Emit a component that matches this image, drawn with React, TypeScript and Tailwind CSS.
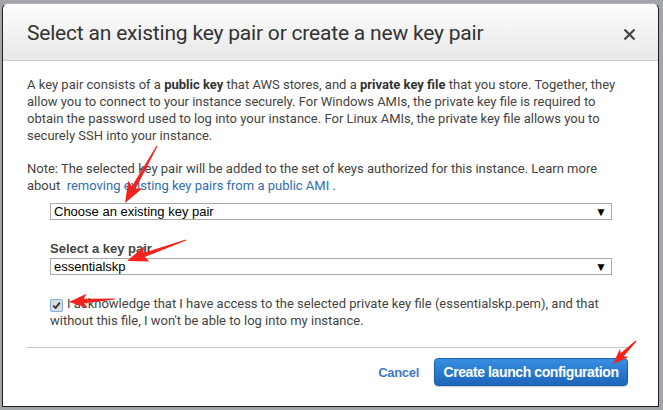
import React from "react";

type Pt = [number, number];

// red annotation arrow, computed from tail and tip
function arrowPoints(tail: Pt, tip: Pt, head = 18, headW = 8, shaftW = 2.2) {
  const dx = tip[0] - tail[0];
  const dy = tip[1] - tail[1];
  const len = Math.hypot(dx, dy);
  const ux = dx / len;
  const uy = dy / len;
  const nx = -uy;
  const ny = ux;
  const bx = tip[0] - ux * head;
  const by = tip[1] - uy * head;
  const bbx = tip[0] - ux * (head + 3);
  const bby = tip[1] - uy * (head + 3);
  const pts: Pt[] = [
    [tail[0] + nx * 0.6, tail[1] + ny * 0.6],
    [bx + nx * shaftW, by + ny * shaftW],
    [bbx + nx * headW, bby + ny * headW],
    tip,
    [bbx - nx * headW, bby - ny * headW],
    [bx - nx * shaftW, by - ny * shaftW],
    [tail[0] - nx * 0.6, tail[1] - ny * 0.6],
  ];
  return pts.map((p) => p.join(",")).join(" ");
}

const arrows: { tail: Pt; tip: Pt; head?: number; headW?: number }[] = [
  { tail: [157, 146], tip: [125, 203] },
  { tail: [186, 240], tip: [127, 261] },
  { tail: [115, 299], tip: [69, 302], head: 15, headW: 7 },
  { tail: [636, 341], tip: [613, 364], head: 13, headW: 6 },
];

function FakeSelect({ value }: { value: string }) {
  return (
    <div className="ml-[23px] w-[562px] h-[17px] border border-[#a9a9a9] bg-white flex items-center justify-between pl-[3px] pr-[4px] text-[13px] leading-none text-black font-['Liberation_Sans',Arial,sans-serif]">
      <span>{value}</span>
      <span className="text-[12px] leading-none">▼</span>
    </div>
  );
}

export default function App() {
  return (
    <div className="relative w-[663px] h-[410px] overflow-hidden bg-[#a2a6aa] pt-[3px] pl-[2px]">
      <div className="w-[657px] h-[404px] bg-white border border-[#1e1e1e] border-t-[#b5b5b5] rounded-t-[6px] flex flex-col font-['Roboto',sans-serif]">
        {/* Header */}
        <div className="h-[57px] shrink-0 flex items-center justify-between pl-[24px] pr-[22px] pt-[4px] rounded-t-[6px] bg-gradient-to-b from-[#fdfdfd] to-[#e8e8e8] border-b border-[#cfcfcf]">
          <h1 className="text-[21px] text-[#333] tracking-[-0.2px] font-['Roboto',sans-serif]">
            Select an existing key pair or create a new key pair
          </h1>
          <svg width="13" height="13" viewBox="0 0 13 13" className="mt-[1px]">
            <path d="M1.5 1.5 L11.5 11.5 M11.5 1.5 L1.5 11.5" stroke="#444" strokeWidth="2.2" />
          </svg>
        </div>

        {/* Body */}
        <div className="flex-1 pl-[24px] pr-[30px] pt-[15px] text-[13px] leading-[17px] text-[#444]">
          <p>
            A key pair consists of a <b className="text-[#333]">public key</b> that AWS stores, and a{" "}
            <b className="text-[#333]">private key file</b> that you store. Together, they allow you to connect to
            your instance securely. For Windows AMIs, the private key file is required to obtain the password used
            to log into your instance. For Linux AMIs, the private key file allows you to securely SSH into your
            instance.
          </p>
          <p className="mt-[16px]">
            Note: The selected key pair will be added to the set of keys authorized for this instance. Learn more
            about&nbsp; <span className="text-[#2f6eb5]">removing existing key pairs from a public AMI</span> .
          </p>

          <div className="mt-[9px]">
            <FakeSelect value="Choose an existing key pair" />
          </div>

          <div className="mt-[20px] ml-[23px] font-bold text-[#444] font-['Liberation_Sans',Arial,sans-serif]">
            Select a key pair
          </div>
          <div className="mt-[1px]">
            <FakeSelect value="essentialskp" />
          </div>

          <div className="mt-[20px] ml-[23px]">
            <span className="inline-flex align-[-2px] mr-[4px] w-[13px] h-[13px] border border-[#7fb0e6] rounded-[2px] bg-[#dcdcdc] items-center justify-center">
              <svg width="9" height="9" viewBox="0 0 9 9">
                <path d="M1.2 4.6 L3.6 7 L7.8 1.6" stroke="#333" strokeWidth="1.8" fill="none" />
              </svg>
            </span>
            I acknowledge that I have access to the selected private key file (essentialskp.pem), and that without
            this file, I won't be able to log into my instance.
          </div>

          <div className="mt-[18px] h-px bg-[#c8c8c8]" />

          <div className="mt-[10px] flex justify-end items-center gap-[15px]">
            <span className="text-[13px] font-bold text-[#3f7bc9] font-['Liberation_Sans',Arial,sans-serif] tracking-[-0.3px]">
              Cancel
            </span>
            <button className="h-[28px] w-[194px] rounded-[4px] border border-[#1b5fae] bg-gradient-to-b from-[#3790e2] to-[#1d65ba] text-white text-[14px] font-bold font-['Liberation_Sans',Arial,sans-serif] tracking-[-0.4px] shadow-[0_1px_1px_rgba(0,0,0,0.2)]">
              Create launch configuration
            </button>
          </div>
        </div>
      </div>

      {/* red annotation arrows */}
      <svg className="absolute inset-0 pointer-events-none" width="663" height="410">
        {arrows.map((a, i) => (
          <polygon key={i} points={arrowPoints(a.tail, a.tip, a.head, a.headW)} fill="#f5231e" />
        ))}
      </svg>
    </div>
  );
}
